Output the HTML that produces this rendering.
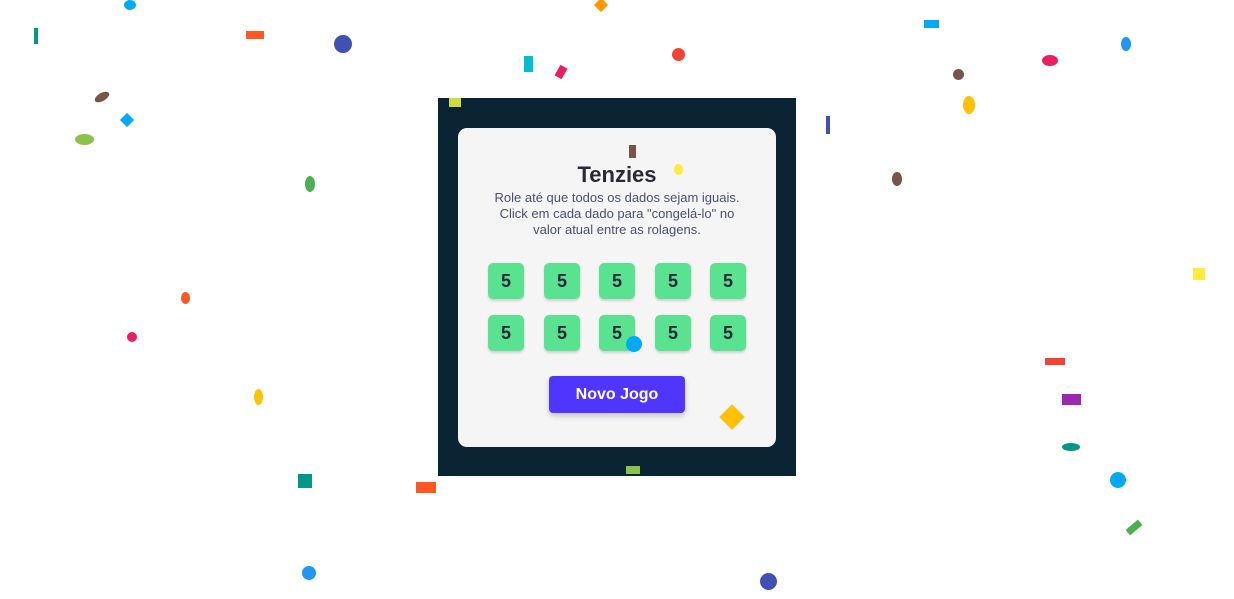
<!DOCTYPE html><html><head><style>
body{margin:0;width:1234px;height:599px;background:#fff;position:relative;overflow:hidden;font-family:"Liberation Sans",sans-serif}
#box{position:absolute;left:438px;top:98px;width:358px;height:378px;background:#0b2434}
#card{position:absolute;left:458px;top:128px;width:318px;height:319px;background:#f5f5f5;border-radius:9px}
h1{position:absolute;left:458px;width:318px;top:162px;margin:0;text-align:center;font-size:22px;color:#2b283a;font-weight:bold}
p{position:absolute;left:458px;width:318px;top:190px;margin:0;text-align:center;font-size:13px;line-height:16px;color:#4a4e74}
.d{position:absolute;width:36px;height:36px;background:#59e391;border-radius:5px;box-shadow:0 2px 2px rgba(0,0,0,.15);text-align:center;line-height:36px;font-weight:bold;font-size:18px;color:#2b283a}
#btn{position:absolute;left:549px;top:376px;width:136px;height:37px;background:#5035ff;border-radius:4px;color:#fff;font-weight:bold;font-size:16px;text-align:center;line-height:37px;box-shadow:0 3px 6px rgba(0,0,0,.2)}
.c{position:absolute}
</style></head><body>
<div id="box"></div><div id="card"></div>
<h1>Tenzies</h1>
<p>Role até que todos os dados sejam iguais.<br>Click em cada dado para "congelá-lo" no<br>valor atual entre as rolagens.</p>
<div class="d" style="left:488px;top:263px">5</div><div class="d" style="left:544px;top:263px">5</div><div class="d" style="left:599px;top:263px">5</div><div class="d" style="left:655px;top:263px">5</div><div class="d" style="left:710px;top:263px">5</div>
<div class="d" style="left:488px;top:315px">5</div><div class="d" style="left:544px;top:315px">5</div><div class="d" style="left:599px;top:315px">5</div><div class="d" style="left:655px;top:315px">5</div><div class="d" style="left:710px;top:315px">5</div>
<div id="btn">Novo Jogo</div>
<div class="c" style="left:334px;top:35px;width:18px;height:18px;border-radius:50%;background:#3f51b5"></div>
<div class="c" style="left:124px;top:0;width:12px;height:10px;border-radius:50%;background:#03a9f4"></div>
<div class="c" style="left:246px;top:31px;width:18px;height:8px;background:#ff5722"></div>
<div class="c" style="left:672px;top:48px;width:13px;height:13px;border-radius:50%;background:#f44336"></div>
<div class="c" style="left:75px;top:134px;width:19px;height:11px;border-radius:50%;background:#8bc34a"></div>
<div class="c" style="left:305px;top:176px;width:10px;height:16px;border-radius:50%;background:#4caf50"></div>
<div class="c" style="left:953px;top:69px;width:11px;height:11px;border-radius:50%;background:#795548"></div>
<div class="c" style="left:963px;top:96px;width:12px;height:18px;border-radius:50%;background:#ffc107"></div>
<div class="c" style="left:1042px;top:55px;width:16px;height:11px;border-radius:50%;background:#e91e63"></div>
<div class="c" style="left:1121px;top:37px;width:10px;height:14px;border-radius:50%;background:#2196f3"></div>
<div class="c" style="left:1193px;top:268px;width:12px;height:12px;background:#ffeb3b"></div>
<div class="c" style="left:1045px;top:358px;width:20px;height:7px;background:#f44336"></div>
<div class="c" style="left:1062px;top:394px;width:19px;height:11px;background:#9c27b0"></div>
<div class="c" style="left:1110px;top:472px;width:16px;height:16px;border-radius:50%;background:#03a9f4"></div>
<div class="c" style="left:298px;top:474px;width:14px;height:14px;background:#009688"></div>
<div class="c" style="left:416px;top:482px;width:20px;height:11px;background:#ff5722"></div>
<div class="c" style="left:302px;top:566px;width:14px;height:14px;border-radius:50%;background:#2196f3"></div>
<div class="c" style="left:760px;top:573px;width:17px;height:17px;border-radius:50%;background:#3f51b5"></div>
<div class="c" style="left:626px;top:336px;width:16px;height:16px;border-radius:50%;background:#03a9f4"></div>
<div class="c" style="left:723px;top:408px;width:18px;height:18px;background:#ffc107;transform:rotate(45deg)"></div>
<div class="c" style="left:181px;top:292px;width:9px;height:12px;border-radius:50%;background:#ff5722"></div>
<div class="c" style="left:127px;top:332px;width:10px;height:10px;border-radius:50%;background:#e91e63"></div>
<div class="c" style="left:254px;top:389px;width:9px;height:16px;border-radius:50%;background:#ffc107"></div>
<div class="c" style="left:892px;top:172px;width:10px;height:14px;border-radius:50%;background:#795548"></div>
<div class="c" style="left:524px;top:56px;width:9px;height:16px;background:#00bcd4"></div>
<div class="c" style="left:924px;top:20px;width:15px;height:8px;background:#03a9f4"></div>
<div class="c" style="left:1062px;top:443px;width:18px;height:8px;border-radius:50%;background:#009688"></div>
<div class="c" style="left:1126px;top:524px;width:16px;height:7px;background:#4caf50;transform:rotate(-40deg)"></div>
<div class="c" style="left:449px;top:98px;width:12px;height:9px;background:#cddc39"></div>
<div class="c" style="left:626px;top:466px;width:14px;height:8px;background:#8bc34a"></div>
<div class="c" style="left:674px;top:164px;width:9px;height:11px;border-radius:50%;background:#ffeb3b"></div>
<div class="c" style="left:629px;top:145px;width:7px;height:13px;background:#795548"></div>
<div class="c" style="left:34px;top:28px;width:4px;height:16px;background:#009688"></div>
<div class="c" style="left:826px;top:116px;width:4px;height:18px;background:#3f51b5"></div>
<div class="c" style="left:122px;top:115px;width:10px;height:10px;background:#03a9f4;transform:rotate(45deg)"></div>
<div class="c" style="left:94px;top:93px;width:16px;height:8px;border-radius:50%;background:#795548;transform:rotate(-30deg)"></div>
<div class="c" style="left:596px;top:0;width:10px;height:10px;background:#ff9800;transform:rotate(45deg)"></div>
<div class="c" style="left:557px;top:66px;width:8px;height:12px;background:#e91e63;transform:rotate(30deg)"></div>
</body></html>
